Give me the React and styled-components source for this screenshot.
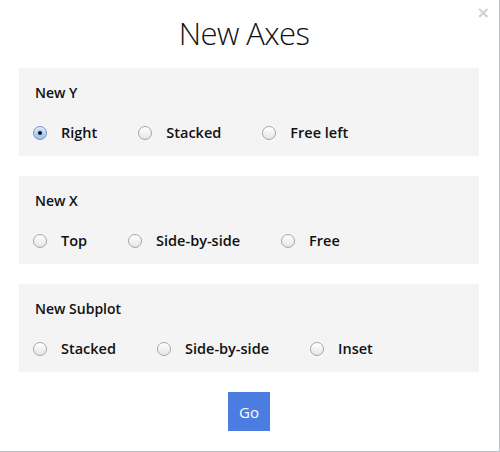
import React, { useState } from 'react';
import styled, { createGlobalStyle } from 'styled-components';

const GlobalStyle = createGlobalStyle`
  html, body {
    margin: 0;
    padding: 0;
    background: #ffffff;
  }
  body {
    font-family: "Open Sans", "Liberation Sans", sans-serif;
    color: #111;
  }
`;

const groups = [
  { id: 'y', title: 'New Y', options: ['Right', 'Stacked', 'Free left'] },
  { id: 'x', title: 'New X', options: ['Top', 'Side-by-side', 'Free'] },
  { id: 'sub', title: 'New Subplot', options: ['Stacked', 'Side-by-side', 'Inset'] },
];

function App() {
  const [picked, setPicked] = useState({ y: 'Right', x: null, sub: null });

  return (
    <>
      <GlobalStyle />
      <Modal>
        <Close>×</Close>
        <Title>New Axes</Title>
        {groups.map((g) => (
          <Section key={g.id}>
            <SectionLabel>{g.title}</SectionLabel>
            <Options>
              {g.options.map((opt) => (
                <Option key={opt} onClick={() => setPicked({ ...picked, [g.id]: opt })}>
                  <Radio $checked={picked[g.id] === opt} />
                  <span>{opt}</span>
                </Option>
              ))}
            </Options>
          </Section>
        ))}
        <Footer>
          <GoButton>Go</GoButton>
        </Footer>
      </Modal>
    </>
  );
}

const Modal = styled.div`
  position: relative;
  box-sizing: border-box;
  width: 500px;
  height: 452px;
  padding: 13px 20px 0 19px;
  background: #fff;
  border-right: 1px solid #b9c0c6;
  border-bottom: 1px solid #b9c0c6;
`;

const Close = styled.span`
  position: absolute;
  top: 3px;
  right: 9px;
  font-family: "DejaVu Sans", sans-serif;
  font-size: 16px;
  font-weight: bold;
  color: #cfcfcf;
  line-height: 20px;
`;

const Title = styled.h1`
  margin: 0 0 15px;
  padding-right: 10px;
  text-align: center;
  font-size: 31px;
  font-weight: 300;
  line-height: 40px;
  color: #111;
  letter-spacing: -0.6px;
`;

const Section = styled.div`
  background: #f4f4f4;
  padding: 15px 16px 13px;
  margin-bottom: 20px;
`;

const SectionLabel = styled.div`
  font-size: 14px;
  font-weight: 600;
  line-height: 20px;
  margin-bottom: 20px;
`;

const Options = styled.div`
  display: flex;
  align-items: center;
  gap: 43px;
`;

const Option = styled.label`
  display: flex;
  align-items: center;
  gap: 14px;
  font-size: 14.5px;
  font-weight: 600;
  line-height: 20px;
  cursor: pointer;
  margin-left: -2px;
`;

const Radio = styled.span`
  position: relative;
  box-sizing: border-box;
  width: 14px;
  height: 14px;
  border-radius: 50%;
  border: 1px solid ${(p) => (p.$checked ? '#6d8fc6' : '#a5a5a5')};
  background: ${(p) =>
    p.$checked
      ? 'linear-gradient(#cfe0fb, #9fc0f2)'
      : 'linear-gradient(#ffffff, #e6e6e6)'};
  box-shadow: inset 0 1px 1px rgba(255, 255, 255, 0.8);

  &::after {
    content: "";
    display: ${(p) => (p.$checked ? 'block' : 'none')};
    position: absolute;
    left: 50%;
    top: 50%;
    width: 4px;
    height: 4px;
    margin: -2px 0 0 -2px;
    border-radius: 50%;
    background: #111;
  }
`;

const Footer = styled.div`
  display: flex;
  justify-content: center;
`;

const GoButton = styled.button`
  width: 42px;
  height: 39px;
  border: none;
  border-radius: 0;
  background: #4a7ddf;
  color: #fff;
  font-family: "Open Sans", "Liberation Sans", sans-serif;
  font-size: 15px;
  font-weight: 400;
  padding: 0;
  cursor: pointer;
`;

export default App;
